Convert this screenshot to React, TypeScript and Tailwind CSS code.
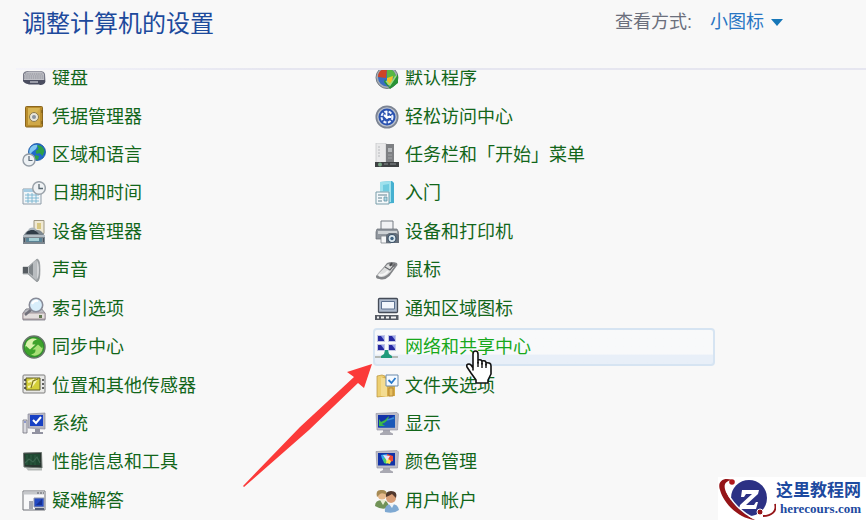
import React from "react";

type Item = { name: string; icon: React.ReactNode; active?: boolean };

function Icon({ children }: { children: React.ReactNode }) {
  return (
    <svg viewBox="0 0 24 24" className="size-6 shrink-0" aria-hidden="true">
      {children}
    </svg>
  );
}

// Shared monitor body used by the display related icons
function Monitor({ children }: { children: React.ReactNode }) {
  return (
    <Icon>
      <path d="M5 21.500 8 20V17h7v3l3 1.500v1.500H5z" fill="#a9a9b2" />
      <path d="M1 1.500 22 .5l1.500 1.500-1 16L2 18z" fill="#bcbcc8" stroke="#8e8e9e" strokeWidth=".6" />
      <path d="M3 3h17v12.500H3z" fill="#1233a8" />
      {children}
    </Icon>
  );
}

const keyboardIcon = (
  <Icon>
    <path d="M1 8q1-3 5-3h12q4 0 5 3l.5 8q-3 3-6 2H7q-4 0-6-3z" fill="#777986" />
    <path d="M2 8q2-2.500 5-2.500h11q3 0 4 2.500v6H2z" fill="#bfc0c6" />
    <path d="M3 8h18M2 10h20M2 12h20" stroke="#85868f" strokeWidth=".8" strokeDasharray="1.500 .7" />
    <path d="M1 14h22v3q-3 3-6 1.500H7Q3 18 1 15z" fill="#4b4e60" />
    <path d="M8 15h8v2H8z" fill="#9a9ca8" />
  </Icon>
);

const safeIcon = (
  <Icon>
    <rect x="3.500" y="1.500" width="17" height="20.500" rx="1" fill="#b98d2c" stroke="#8b661d" />
    <path d="M6 3h12v17H6z" fill="#d8b656" />
    <path d="M6 20 18 3v17z" fill="#cfa848" />
    <circle cx="12" cy="12" r="4.500" fill="#e9e6da" stroke="#8c7a4b" />
    <circle cx="12" cy="12" r="2" fill="#8792a0" />
    <path d="M20 5v3M20 16v3" stroke="#6f5216" />
  </Icon>
);

const regionIcon = (
  <Icon>
    <circle cx="15" cy="9" r="8.500" fill="#2068cc" stroke="#17559b" strokeWidth=".8" />
    <path d="M9 4q3-3 7-2l-2 4-4 3-2 3q-2-4 1-8z" fill="#82c8f1" />
    <path d="M15 2q6 0 7.500 6l-2 5-3-3-3 1-1-3 3-2zM13 12l4 1-1 4-3-1z" fill="#2da046" />
    <circle cx="7" cy="17" r="6" fill="#edf1f4" stroke="#939ca5" strokeWidth="1.400" />
    <path d="M7 13v4.500h3.500" fill="none" stroke="#5a6873" strokeWidth="1.200" />
  </Icon>
);

const dateIcon = (
  <Icon>
    <path d="M1 8h18v15H1z" fill="#f1f5f8" stroke="#8e9ca8" />
    <path d="M1.500 8h17v3h-17z" fill="#a6cce2" />
    <path d="M3 14h14M3 17h14M3 20h14M6 12v10M10 12v10M14 12v10" stroke="#76b4cf" strokeWidth=".9" />
    <circle cx="17" cy="7" r="6.300" fill="#eff2f4" stroke="#9ba3aa" strokeWidth="1.500" />
    <path d="M17 3v4.500h4" fill="none" stroke="#596872" strokeWidth="1.300" />
  </Icon>
);

const deviceIcon = (
  <Icon>
    <path d="M12 .5h10v13H12z" fill="#f0e9d3" stroke="#9c9682" />
    <path d="M15 3h4v6h-4z" fill="#d8c780" />
    <path d="M4 12q2-2 4-2h8q2 0 4 2l3 4v8H1v-8z" fill="#7d878f" />
    <path d="M5 12q5-5 10 0l2 2H4z" fill="#303c48" />
    <path d="M7 10q3-3 7 0" stroke="#aab4bc" strokeWidth="2" fill="none" />
    <path d="M1 15h22v2H1z" fill="#b3bcc3" />
    <path d="M4 18h16v4H4z" fill="#5b8496" />
    <path d="M7 18h10v3H7z" fill="#a7cfd6" />
    <path d="M2.500 18v4M21.500 18v4" stroke="#46525d" />
  </Icon>
);

const soundIcon = (
  <Icon>
    <path d="M1 9h5l9-8q3 0 3 11t-3 12l-9-8H1z" fill="#9a9fa2" stroke="#84898d" strokeWidth=".6" />
    <path d="M1 9h5v6H1z" fill="#565c61" />
    <path d="m6 9 8-7v20l-8-7z" fill="#b9bdc0" />
    <path d="m7 9 4-4v13l-4-3z" fill="#80868a" />
    <path d="M14.500 2q2.500 3 2.500 10t-2.500 10z" fill="#d3d6d8" />
  </Icon>
);

const indexIcon = (
  <Icon>
    <path d="m4 12 15-1 4 5v7H1v-7z" fill="#babbc1" stroke="#777780" strokeWidth=".8" />
    <path d="M1 16h22v6H1z" fill="#e3dedd" stroke="#94838b" strokeWidth=".8" />
    <path d="M17 18h3v3h-3z" fill="#647953" />
    <path d="m10 12-7 6" stroke="#71717b" strokeWidth="2.500" />
    <circle cx="14" cy="8" r="6.700" fill="#d8eefa" stroke="#888b98" strokeWidth="1.600" />
    <path d="M10 7q2-4 6-3" stroke="white" strokeWidth="2" fill="none" />
  </Icon>
);

const syncIcon = (
  <Icon>
    <circle cx="12" cy="12" r="11" fill="#278e27" stroke="#68766a" strokeWidth="1.500" />
    <circle cx="12" cy="12" r="9.500" fill="#3fa32c" />
    <path d="M3.500 13q-.5-8 6.500-9.500 3-.5 5 1-5 1-4.500 5l3 0-5.500 5-5-4.500z" fill="#d8f2ac" />
    <path d="M20.500 11q.5 8-6.500 9.500-3 .5-5-1 5-1 4.500-5h-3l5.500-5 5 4.500z" fill="#a8df76" />
  </Icon>
);

const sensorIcon = (
  <Icon>
    <rect x="1" y="1" width="22" height="18" rx="1" fill="#e8e8e6" stroke="#7c7c7c" />
    <path d="M4 4h14v12H4z" fill="#d4cf38" stroke="#615e2d" />
    <path d="m6 8 5-2-1 6 5-7M6 13l4-1" stroke="#faf6b0" strokeWidth="2" fill="none" />
    <path d="m9 14 2-7 5-2" stroke="#7f7720" strokeWidth="1.200" fill="none" />
    <path d="M21 5v2M21 9v2M21 13v2M3 5v2M3 9v2M3 13v2" stroke="#353535" strokeWidth="1.500" />
  </Icon>
);

const systemIcon = (
  <Icon>
    <path d="M1 8h4v13H1z" fill="#dadae0" stroke="#74747d" strokeWidth=".8" />
    <path d="M2 10h2" stroke="#4258b9" />
    <path d="m6 2 17-1v16L6 16z" fill="#b5b5c2" stroke="#8c8c9b" strokeWidth=".7" />
    <path d="M8 3h13v11H8z" fill="#1740c4" />
    <path d="m11 8 3 3 5-6" stroke="white" strokeWidth="2" fill="none" />
    <path d="M13 17h5v3h3v2H10v-2h3z" fill="#9293a1" />
  </Icon>
);

const performanceIcon = (
  <Icon>
    <path d="m1.500 3 18-.5.5 15.500-18-1z" fill="#28352f" stroke="#6d7771" />
    <path d="M3 4h15v11H3z" fill="#1f4932" />
    <path d="M5 5v10M9 5v10M13 5v10" stroke="#2f5d43" />
    <path d="m3 13 4-4 4 3 4-5 3 6" stroke="#3d6650" strokeWidth="1.200" fill="none" />
    <path d="m4 18 16 1v1.500H6z" fill="#b3b8b5" />
  </Icon>
);

const troubleshootIcon = (
  <Icon>
    <path d="M1 2h22v19H1z" fill="#f8f8f9" stroke="#6f7077" />
    <path d="M1.500 2.500h21v3h-21z" fill="#c5c7ca" />
    <path d="M15 4h2M18 4h2M21 4h1" stroke="#565960" />
    <path d="M12 9h10v9H12z" fill="#244ac3" stroke="#9196a8" />
    <path d="M7 12h4v8H7z" fill="#a5a7b0" />
    <path d="M13 19h9v2h-9z" fill="#565f76" />
    <path d="m14 16 6-6v6z" fill="#173192" />
  </Icon>
);

const defaultsIcon = (
  <Icon>
    <circle cx="12" cy="11.500" r="11" fill="#a6acb4" stroke="#747c85" />
    <circle cx="12" cy="11.500" r="9" fill="#3a6cc0" />
    <path d="M3 11q0-8 9-8l-1 9z" fill="#cf4427" />
    <path d="M12 3q8 0 9 8l-9 2z" fill="#58b744" />
    <path d="m12 12 6-2-1 9h-5z" fill="#efc229" />
    <path d="m10 13 4 8L23 8v9l-8 6-6-7z" fill="#289235" />
    <path d="m11 15 4 4 6-9" stroke="#9bdc7c" strokeWidth="1.500" fill="none" />
  </Icon>
);

const accessIcon = (
  <Icon>
    <circle cx="12" cy="12" r="10.700" fill="#b9c0cc" stroke="#7c8493" strokeWidth="1.700" />
    <circle cx="12" cy="12" r="8.500" fill="#2a52b0" />
    <circle cx="12" cy="12" r="5.500" fill="none" stroke="#ecf2ff" strokeWidth="2" strokeDasharray="3 1.500" />
    <path d="M11.500 6v6h5M9 10l3 3 3-2" stroke="white" strokeWidth="1.800" fill="none" />
  </Icon>
);

const taskbarIcon = (
  <Icon>
    <path d="M1 0h10v20H1z" fill="#e9e9ea" stroke="#c3c4c6" strokeWidth=".7" />
    <path d="M3 4h2M3 7h2M3 10h2M3 13h2" stroke="#b8babd" />
    <path d="M11 1h8v19h-8z" fill="#7e8083" />
    <path d="M13 5h4v4h-4z" fill="#b4b7ba" />
    <path d="M13 12h4M13 15h4" stroke="#a3a5a8" />
    <path d="M0 19h24v5H0z" fill="#3e4143" />
    <circle cx="5" cy="21.500" r="2" fill="#7aa586" />
    <path d="M9 21h4M15 21h6" stroke="#888f93" />
  </Icon>
);

const startedIcon = (
  <Icon>
    <path d="m5 1 12-1 2 2v20l-14 1z" fill="#45b0d0" />
    <path d="m5 1 11-1v21l-11 1z" fill="#9ee1ed" />
    <path d="m8 4 6-1v7H8z" fill="#6fcbdf" />
    <path d="M1 11h13v12H1z" fill="#f4f8fa" stroke="#789da9" />
    <path d="M3 14h9M3 17h4M3 20h4" stroke="#618391" />
    <path d="M9 16h3v4H9z" fill="#acd7e3" stroke="#6392a4" strokeWidth=".8" />
  </Icon>
);

const printerIcon = (
  <Icon>
    <path d="M6 1h12v9H6z" fill="#f1f2f4" stroke="#777d84" />
    <path d="M2 9h20l2 4v6H1v-7z" fill="#92989f" stroke="#656c73" strokeWidth=".7" />
    <path d="M3 11h19v3H3z" fill="#ced2d5" />
    <path d="M6 16h10v7H6z" fill="#f6f7f8" stroke="#81868b" strokeWidth=".8" />
    <path d="m11 15 3-2h7l3 2v8H11z" fill="#666f7a" />
    <circle cx="17" cy="18.500" r="4" fill="#dce8ef" stroke="#3c5268" strokeWidth="1.200" />
    <circle cx="17" cy="18.500" r="1.700" fill="#3e6280" />
  </Icon>
);

const mouseIcon = (
  <Icon>
    <path d="M1 18q3-4 7-8l4-5q5-2 10 0l.5 2-8 11q-5 5-10 3-4 0-3.500-3z" fill="#838588" />
    <path d="M2 17q3-3 7-7l4-4 6 3q-3 5-7 8-6 4-10 0z" fill="#dedfdf" />
    <path d="m10 9 5 3 5-6" stroke="#66676a" strokeWidth="1.200" fill="none" />
    <path d="m17 5-2 3" stroke="#4a4b4e" strokeWidth="2" />
    <path d="M4 17q5 1 9-4" stroke="#f6f6f6" strokeWidth="2" fill="none" />
  </Icon>
);

const notifyIcon = (
  <Icon>
    <rect x="3.500" y="1.500" width="19" height="14" rx="1" fill="#acb8ca" stroke="#454c58" strokeWidth="1.300" />
    <path d="M6.500 4.500h13V12h-13z" fill="#f2f6fc" stroke="#5d7190" />
    <path d="M0 18h23.500v5H0z" fill="#565b64" />
    <path d="M2 20.500h2M6 20.500h3M11 20.500h3M16 20.500h5" stroke="#f3f3f3" strokeWidth="2" />
  </Icon>
);

const networkIcon = (
  <Icon>
    <path d="M2 0h8v7H2zM13 0h8v7h-8zM2 9h8v7H2zM13 9h8v7h-8z" fill="#c3c8e5" />
    <path d="M3 1h6v5H3zM14 1h6v5h-6zM3 10h6v5H3zM14 10h6v5h-6z" fill="#2629a2" />
    <path d="m6 1 3 4V1zM17 1l3 4V1zM6 10l3 4v-4zM17 10l3 4v-4z" fill="#98a4ea" />
    <path d="m9 19 1-4h3l1 4 3 2v2H6v-2z" fill="#209a7c" />
    <path d="M0 21h6v2H0zM17 21h6v2h-6z" fill="#b4b9b5" />
  </Icon>
);

const folderIcon = (
  <Icon>
    <path d="m2 2 5-1 3 1v20l-8 1z" fill="#edcf72" stroke="#b8903a" strokeWidth=".7" />
    <path d="m6 3 14-1v20l-14 1z" fill="#d7ad49" />
    <path d="m6 3 6 2v18l-6-1z" fill="#f4dc91" />
    <path d="M14 14h4v8h-4z" fill="#e6bf60" stroke="#a97a2a" strokeWidth=".7" />
    <path d="M11 1h12v11H11z" fill="#f6faff" stroke="#6a8aac" />
    <path d="m13.500 6 3 3 4-5" stroke="#287acc" strokeWidth="1.800" fill="none" />
  </Icon>
);

const displayIcon = (
  <Monitor>
    <path d="M3 15.500 20 3v12.500z" fill="#1a58b8" />
    <path d="M4 14V7l2 3q5-2 8-6-1 6-7 8l3 2z" fill="#3cb94a" />
    <path d="M12 8q4-1 7-2" stroke="#3d8bd4" strokeWidth="1.500" fill="none" />
  </Monitor>
);

const colorIcon = (
  <Monitor>
    <path d="m6 5 6-1v9q-5-1-6-8z" fill="#33a9eb" />
    <path d="m12 4 6 2v5l-6 2z" fill="#ef4b36" />
    <path d="m8 9 4-3v8l-3-1z" fill="#47ce6b" />
    <path d="m12 8 4 3-1 3-4-1z" fill="#f7e74e" />
    <path d="m8 5 7 1-3 5z" fill="#efe3f2" />
  </Monitor>
);

const usersIcon = (
  <Icon>
    <path d="M0 17q0-6 7-6 6 0 7 7-6 4-14-1z" fill="#719357" />
    <circle cx="7" cy="6" r="4.500" fill="#e6b98c" />
    <path d="M2 8Q0 0 7 1q5 0 5 5-5-3-7-1z" fill="#a68a54" />
    <path d="m5 11 3 5 3-5z" fill="#e8edd3" />
    <path d="M10 23q-1-8 7-8 6 0 7 6-5 4-14 2z" fill="#7fa9d2" />
    <circle cx="16" cy="9" r="5" fill="#d79d76" />
    <path d="M11 8q-1-6 5-6 7 0 5 7l-4-4q-3 2-6 3z" fill="#51382d" />
    <path d="m14 15 3 4 2-4z" fill="#eef3f7" />
  </Icon>
);

const items: Item[] = [
  { name: "键盘", icon: keyboardIcon },
  { name: "默认程序", icon: defaultsIcon },
  { name: "凭据管理器", icon: safeIcon },
  { name: "轻松访问中心", icon: accessIcon },
  { name: "区域和语言", icon: regionIcon },
  { name: "任务栏和「开始」菜单", icon: taskbarIcon },
  { name: "日期和时间", icon: dateIcon },
  { name: "入门", icon: startedIcon },
  { name: "设备管理器", icon: deviceIcon },
  { name: "设备和打印机", icon: printerIcon },
  { name: "声音", icon: soundIcon },
  { name: "鼠标", icon: mouseIcon },
  { name: "索引选项", icon: indexIcon },
  { name: "通知区域图标", icon: notifyIcon },
  { name: "同步中心", icon: syncIcon },
  { name: "网络和共享中心", icon: networkIcon, active: true },
  { name: "位置和其他传感器", icon: sensorIcon },
  { name: "文件夹选项", icon: folderIcon },
  { name: "系统", icon: systemIcon },
  { name: "显示", icon: displayIcon },
  { name: "性能信息和工具", icon: performanceIcon },
  { name: "颜色管理", icon: colorIcon },
  { name: "疑难解答", icon: troubleshootIcon },
  { name: "用户帐户", icon: usersIcon },
];

function PanelLink({ item }: { item: Item }) {
  return (
    <a
      href="#"
      className={
        item.active
          ? "flex items-center gap-1.5 rounded-sm border-2 border-[#d6e4f2] bg-linear-to-b from-[#f8f9fa] from-70% to-[#e8eff8] to-75% text-[#17a81c]"
          : "flex items-center gap-1.5 border-2 border-transparent text-[#12661a]"
      }
    >
      {item.icon}
      <span className="text-[18px] leading-6 whitespace-nowrap">{item.name}</span>
    </a>
  );
}

function Watermark() {
  return (
    <div className="absolute right-0 bottom-0 flex h-[43px] items-center bg-white pr-[5px]">
      <svg viewBox="0 0 58 43" className="h-[43px] w-[58px]" aria-hidden="true">
        <circle cx="31" cy="21" r="18" fill="#2c3184" />
        <path d="M24 13h17l-1 4-12 11h8l2-3h2l-2 7H21l1-4 12-11h-6l-2 3h-3z" fill="white" />
        <path d="M14 3C5 0-1 5 2 13c4 14 18 28 35 30-12-6-24-17-29-28C5 8 7 4 14 3z" fill="#951518" />
        <path d="M9 15c5 10 13 19 26 26" fill="none" stroke="white" strokeWidth="1.500" />
        <path d="M57 27c2 7-3 12-12 12" fill="none" stroke="#951518" strokeWidth="1.800" />
        <circle cx="14" cy="5" r="2.800" fill="#b0181c" />
        <circle cx="42" cy="35" r="3" fill="#951518" stroke="white" />
      </svg>
      <div className="flex flex-col items-end text-[#1d4aa0]">
        <span className="text-[17px] leading-5 font-bold">这里教程网</span>
        <span className="font-['Liberation_Serif',serif] text-[13px] leading-4 font-bold">herecours.com</span>
      </div>
    </div>
  );
}

export default function App() {
  return (
    <div className="relative flex min-h-screen flex-col overflow-hidden bg-[#f8f8f8] font-['Liberation_Sans','Noto_Sans_CJK_SC',sans-serif]">
      <header className="flex h-[68px] items-start justify-between pt-2 pr-[83px] pl-[22px]">
        <h1 className="text-[24px] leading-8 text-[#1d4a9c]">调整计算机的设置</h1>
        <div className="flex items-center text-[18px] leading-7">
          <label htmlFor="view" className="text-[#6b6f7c]">
            查看方式:
          </label>
          <div className="relative ml-[18px] flex items-center">
            <select id="view" defaultValue="small" className="appearance-none bg-transparent pr-[19px] text-[#2876c4]">
              <option value="category">类别</option>
              <option value="large">大图标</option>
              <option value="small">小图标</option>
            </select>
            <svg viewBox="0 0 12 7" className="pointer-events-none absolute right-0 h-[7px] w-3" aria-hidden="true">
              <path d="M0 0h12L6 7z" fill="#1777b8" />
            </svg>
          </div>
        </div>
      </header>
      <div className="ml-4 h-0.5 bg-linear-to-r from-[#f4f4fa] to-[#e6e6f0] to-30%" />

      <main className="flex flex-1 flex-col overflow-hidden pr-[151px] pl-5">
        <nav className="-mt-[11px] grid flex-1 auto-rows-fr grid-cols-2 gap-x-[11px]">
          {items.map((item) => (
            <PanelLink key={item.name} item={item} />
          ))}
        </nav>
      </main>

      {/* Pointer and hint arrow float over the list */}
      <svg viewBox="0 0 130 125" className="pointer-events-none absolute top-[363px] left-[243px] h-[125px] w-[130px]" aria-hidden="true">
        <path d="M129 1 104 9l7 5L57 64 0 123l1 1 65-57 49-47 6 5z" fill="#fb3a39" />
      </svg>
      <svg viewBox="0 0 27 34" className="pointer-events-none absolute top-[350px] left-[466px] h-[34px] w-[27px]" aria-hidden="true">
        <path
          d="M7 20V4q0-3 2.500-3T12 4v9-3q4-1 4 2v2-3q4-1 4 2v2-2q5-1 5 3v8l-3 6v3H10v-3l-5-7-4-6q-1-3 2-3 2 0 4 4z"
          fill="white"
          stroke="#111"
          strokeWidth="1.600"
          strokeLinejoin="round"
        />
        <path d="M12 12v5M16 13v5M20 14v4" stroke="#111" strokeWidth="1.400" />
      </svg>

      <Watermark />
    </div>
  );
}
